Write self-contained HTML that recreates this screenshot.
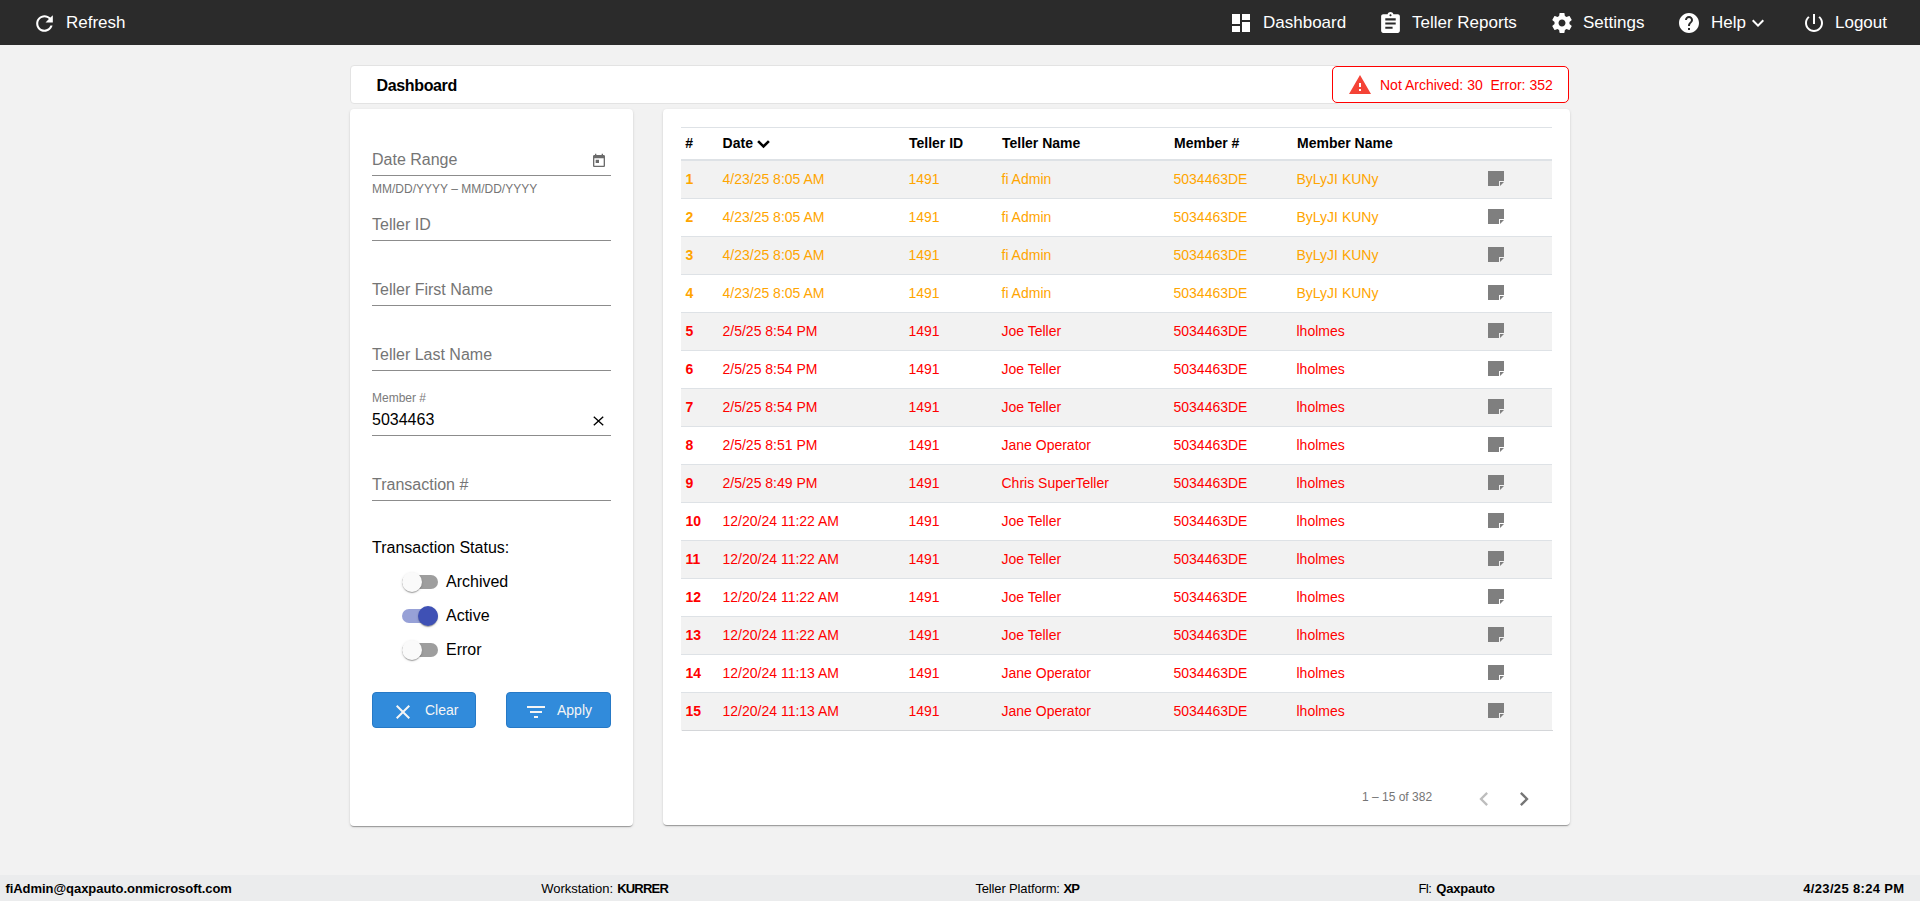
<!DOCTYPE html><html><head><meta charset="utf-8"><title>Dashboard</title><style>
*{margin:0;padding:0;box-sizing:border-box}
html,body{width:1920px;height:901px;overflow:hidden;background:#f2f2f2;font-family:"Liberation Sans",sans-serif}
.t{position:absolute;white-space:pre}
.i{position:absolute;display:block}
#nav{position:absolute;left:0;top:0;width:1920px;height:45px;background:#2b2b2b}
#titlecard{position:absolute;left:350px;top:65px;width:990px;height:39px;background:#fff;border:1px solid #e3e3e3;border-radius:4px}
#warn{position:absolute;left:1332px;top:66px;width:237px;height:37px;background:#fff;border:1px solid #f00;border-radius:5px}
.card{position:absolute;background:#fff;border-radius:4px;box-shadow:0 2px 1px -1px rgba(0,0,0,.2),0 1px 1px 0 rgba(0,0,0,.14),0 1px 3px 0 rgba(0,0,0,.12)}
#leftcard{left:350px;top:109px;width:283px;height:717px}
#rightcard{left:663px;top:109px;width:907px;height:716px}
.ul{position:absolute;left:372px;width:239px;height:1px;background:#8c8c8c}
.track{position:absolute;left:402px;width:36px;height:14px;border-radius:7px;background:rgba(0,0,0,.38)}
.track.on{background:rgba(63,81,181,.54)}
.thumb{position:absolute;width:20px;height:20px;border-radius:50%;background:#fafafa;box-shadow:0 2px 1px -1px rgba(0,0,0,.2),0 1px 1px 0 rgba(0,0,0,.14),0 1px 3px 0 rgba(0,0,0,.12)}
.thumb.on{background:#3f51b5}
.btn{position:absolute;top:692px;width:104px;height:36px;background:#318bdb;border:1px solid #2679c6;border-radius:4px}
.hl{position:absolute;left:681px;width:871px;background:#dee2e6}
.stripe{position:absolute;left:681px;width:871px;height:38px;background:#f2f2f2}
.note{position:absolute;left:1488px;width:16px;height:15px;background:#7b7b7b;border-radius:1px}
#footer{position:absolute;left:0;top:875px;width:1920px;height:26px;background:#ebeced}
</style></head><body><div id="nav"></div>
<svg class="i" style="left:31.5px;top:10.5px;width:25px;height:25px;" viewBox="0 0 24 24"><path fill="#fff" d="M17.65 6.35C16.2 4.9 14.21 4 12 4c-4.42 0-7.99 3.58-7.99 8s3.57 8 7.99 8c3.73 0 6.84-2.55 7.73-6h-2.08c-.82 2.33-3.04 4-5.65 4-3.31 0-6-2.69-6-6s2.69-6 6-6c1.66 0 3.14.69 4.22 1.78L13 11h7V4l-2.35 2.35z"/></svg>
<div class="t" style="left:66px;top:13.61px;font-size:17px;line-height:17px;font-weight:400;color:#fff;">Refresh</div>
<svg class="i" style="left:1229px;top:11px;width:24px;height:24px;" viewBox="0 0 24 24"><path fill="#fff" d="M3 13h8V3H3v10zm0 8h8v-6H3v6zm10 0h8V11h-8v10zm0-18v6h8V3h-8z"/></svg>
<div class="t" style="left:1263px;top:13.61px;font-size:17px;line-height:17px;font-weight:400;color:#fff;">Dashboard</div>
<svg class="i" style="left:1378px;top:10.5px;width:25px;height:25px;" viewBox="0 0 24 24"><path fill="#fff" d="M19 3h-4.18C14.4 1.84 13.3 1 12 1c-1.3 0-2.4.84-2.82 2H5c-1.1 0-2 .9-2 2v14c0 1.1.9 2 2 2h14c1.1 0 2-.9 2-2V5c0-1.1-.9-2-2-2zm-7 0c.55 0 1 .45 1 1s-.45 1-1 1-1-.45-1-1 .45-1 1-1zm2 14H7v-2h7v2zm3-4H7v-2h10v2zm0-4H7V7h10v2z"/></svg>
<div class="t" style="left:1412px;top:13.61px;font-size:17px;line-height:17px;font-weight:400;color:#fff;">Teller Reports</div>
<svg class="i" style="left:1549.5px;top:11px;width:24px;height:24px;" viewBox="0 0 24 24"><path fill="#fff" d="M19.43 12.98c.04-.32.07-.64.07-.98s-.03-.66-.07-.98l2.11-1.65c.19-.15.24-.42.12-.64l-2-3.46c-.12-.22-.39-.3-.61-.22l-2.49 1c-.52-.4-1.08-.73-1.69-.98l-.38-2.65C14.46 2.18 14.25 2 14 2h-4c-.25 0-.46.18-.49.42l-.38 2.65c-.61.25-1.17.59-1.69.98l-2.490-1c-.23-.09-.49 0-.61.22l-2 3.460c-.13.22-.07.49.12.64l2.11 1.65c-.04.32-.07.65-.07.98s.03.66.07.98l-2.11 1.65c-.19.15-.24.42-.12.64l2 3.46c.12.22.39.3.61.22l2.49-1c.52.4 1.08.73 1.69.98l.38 2.65c.03.24.24.42.49.42h4c.25 0 .46-.18.49-.42l.38-2.65c.61-.25 1.17-.59 1.69-.98l2.49 1c.23.09.49 0 .61-.22l2-3.46c.12-.22.07-.49-.12-.64l-2.11-1.65zM12 15.5c-1.93 0-3.5-1.57-3.5-3.5s1.57-3.5 3.5-3.5 3.5 1.57 3.5 3.5-1.57 3.5-3.5 3.5z"/></svg>
<div class="t" style="left:1583px;top:13.61px;font-size:17px;line-height:17px;font-weight:400;color:#fff;">Settings</div>
<svg class="i" style="left:1677px;top:11px;width:24px;height:24px;" viewBox="0 0 24 24"><path fill="#fff" d="M12 2C6.48 2 2 6.48 2 12s4.48 10 10 10 10-4.48 10-10S17.52 2 12 2zm1 17h-2v-2h2v2zm2.07-7.75l-.9.92C13.45 12.9 13 13.5 13 15h-2v-.5c0-1.1.45-2.1 1.17-2.83l1.24-1.26c.37-.36.59-.86.59-1.41 0-1.1-.9-2-2-2s-2 .9-2 2H8c0-2.21 1.79-4 4-4s4 1.79 4 4c0 .88-.36 1.68-.93 2.250z"/></svg>
<div class="t" style="left:1711px;top:13.61px;font-size:17px;line-height:17px;font-weight:400;color:#fff;">Help</div>
<svg class="i" style="left:1746px;top:11px;width:24px;height:24px;" viewBox="0 0 24 24"><path fill="#fff" d="M16.59 8.59L12 13.17 7.41 8.59 6 10l6 6 6-6z"/></svg>
<svg class="i" style="left:1802px;top:11px;width:24px;height:24px;" viewBox="0 0 24 24"><path fill="#fff" d="M13 3h-2v10h2V3zm4.83 2.17l-1.42 1.42C17.99 7.86 19 9.81 19 12c0 3.87-3.13 7-7 7s-7-3.13-7-7c0-2.19 1.01-4.140 2.58-5.42L6.17 5.17C4.23 6.82 3 9.26 3 12c0 4.97 4.03 9 9 9s9-4.03 9-9c0-2.74-1.23-5.18-3.17-6.83z"/></svg>
<div class="t" style="left:1835px;top:13.61px;font-size:17px;line-height:17px;font-weight:400;color:#fff;">Logout</div>
<div id="titlecard"></div>
<div class="t" style="left:376.5px;top:78.06px;font-size:16px;line-height:16px;font-weight:700;color:#000;letter-spacing:-0.35px">Dashboard</div>
<div id="warn"></div>
<svg class="i" style="left:1348px;top:73px;width:24px;height:24px;" viewBox="0 0 24 24"><path fill="#f44336" d="M1 21h22L12 2 1 21zm12-3h-2v-2h2v2zm0-4h-2v-4h2v4z"/></svg>
<div class="t" style="left:1380px;top:78.15px;font-size:14px;line-height:14px;font-weight:400;color:#f00;">Not Archived: 30&nbsp; Error: 352</div>
<div id="leftcard" class="card"></div>
<div class="t" style="left:372px;top:152.46px;font-size:16px;line-height:16px;font-weight:400;color:#757575;">Date Range</div>
<div class="ul" style="top:175px"></div>
<div class="t" style="left:372px;top:217.46px;font-size:16px;line-height:16px;font-weight:400;color:#757575;">Teller ID</div>
<div class="ul" style="top:240px"></div>
<div class="t" style="left:372px;top:282.46px;font-size:16px;line-height:16px;font-weight:400;color:#757575;">Teller First Name</div>
<div class="ul" style="top:305px"></div>
<div class="t" style="left:372px;top:347.46px;font-size:16px;line-height:16px;font-weight:400;color:#757575;">Teller Last Name</div>
<div class="ul" style="top:370px"></div>
<div class="t" style="left:372px;top:477.46px;font-size:16px;line-height:16px;font-weight:400;color:#757575;">Transaction #</div>
<div class="ul" style="top:500px"></div>
<svg class="i" style="left:591px;top:153px;width:16px;height:16px;" viewBox="0 0 24 24"><path fill="#6b6b6b" d="M19 3h-1V1h-2v2H8V1H6v2H5c-1.11 0-1.99.9-1.99 2L3 19c0 1.1.89 2 2 2h14c1.1 0 2-.9 2-2V5c0-1.1-.9-2-2-2zm0 16H5V8h14v11zM7 10h5v5H7z"/></svg>
<div class="t" style="left:372px;top:182.84px;font-size:12px;line-height:12px;font-weight:400;color:#757575;">MM/DD/YYYY – MM/DD/YYYY</div>
<div class="t" style="left:372px;top:391.84px;font-size:12px;line-height:12px;font-weight:400;color:#7b7b7b;">Member #</div>
<div class="t" style="left:372px;top:412.46px;font-size:16px;line-height:16px;font-weight:400;color:#000;">5034463</div>
<div class="ul" style="top:435px"></div>
<svg class="i" style="left:585px;top:408px;width:27px;height:24px" viewBox="585 408 27 24"><path d="M594.3 417.3L602.7 424.7M602.7 417.3L594.3 424.7" stroke="#000" stroke-width="1.35" fill="none" stroke-linecap="square"/></svg>
<div class="t" style="left:372px;top:540.46px;font-size:16px;line-height:16px;font-weight:400;color:#000;">Transaction Status:</div>
<div class="track" style="top:575px"></div><div class="thumb" style="left:402px;top:572px"></div>
<div class="t" style="left:446px;top:574.46px;font-size:16px;line-height:16px;font-weight:400;color:#000;">Archived</div>
<div class="track on" style="top:609px"></div><div class="thumb on" style="left:418px;top:606px"></div>
<div class="t" style="left:446px;top:608.46px;font-size:16px;line-height:16px;font-weight:400;color:#000;">Active</div>
<div class="track" style="top:643px"></div><div class="thumb" style="left:402px;top:640px"></div>
<div class="t" style="left:446px;top:642.46px;font-size:16px;line-height:16px;font-weight:400;color:#000;">Error</div>
<div class="btn" style="left:372px"></div>
<svg class="i" style="left:390.5px;top:700px;width:24px;height:24px;" viewBox="0 0 24 24"><path fill="#f5f5f5" d="M19 6.41L17.59 5 12 10.590 6.41 5 5 6.41 10.59 12 5 17.59 6.41 19 12 13.41 17.59 19 19 17.59 13.41 12z"/></svg>
<div class="t" style="left:425px;top:703.15px;font-size:14px;line-height:14px;font-weight:400;color:#f5f5f5;">Clear</div>
<div class="btn" style="left:506px;width:105px"></div>
<svg class="i" style="left:523.5px;top:700px;width:24px;height:24px;" viewBox="0 0 24 24"><path fill="#f5f5f5" d="M10 18h4v-2h-4v2zM3 6v2h18V6H3zm3 7h12v-2H6v2z"/></svg>
<div class="t" style="left:557px;top:703.15px;font-size:14px;line-height:14px;font-weight:400;color:#f5f5f5;">Apply</div>
<div id="rightcard" class="card"></div>
<div class="hl" style="top:127px;height:1px"></div>
<div class="hl" style="top:159px;height:2px"></div>
<div class="t" style="left:685.3px;top:136.15px;font-size:14px;line-height:14px;font-weight:700;color:#000;">#</div>
<div class="t" style="left:722.6px;top:136.15px;font-size:14px;line-height:14px;font-weight:700;color:#000;">Date</div>
<div class="t" style="left:909px;top:136.15px;font-size:14px;line-height:14px;font-weight:700;color:#000;">Teller ID</div>
<div class="t" style="left:1002px;top:136.15px;font-size:14px;line-height:14px;font-weight:700;color:#000;">Teller Name</div>
<div class="t" style="left:1174px;top:136.15px;font-size:14px;line-height:14px;font-weight:700;color:#000;">Member #</div>
<div class="t" style="left:1297px;top:136.15px;font-size:14px;line-height:14px;font-weight:700;color:#000;">Member Name</div>
<svg class="i" style="left:750px;top:130px;width:30px;height:24px" viewBox="750 130 30 24"><polyline points="758.1,141.1 763.5,146.5 768.9,141.1" fill="none" stroke="#000" stroke-width="2.6" stroke-linecap="butt" stroke-linejoin="miter"/></svg>
<div class="stripe" style="top:161px"></div>
<div class="hl" style="top:198px;height:1px"></div>
<div class="t" style="left:685.5px;top:172.15px;font-size:14px;line-height:14px;font-weight:700;color:#ffa500;">1</div>
<div class="t" style="left:722.5px;top:172.15px;font-size:14px;line-height:14px;font-weight:400;color:#ffa500;">4/23/25 8:05 AM</div>
<div class="t" style="left:908.5px;top:172.15px;font-size:14px;line-height:14px;font-weight:400;color:#ffa500;">1491</div>
<div class="t" style="left:1001.5px;top:172.15px;font-size:14px;line-height:14px;font-weight:400;color:#ffa500;">fi Admin</div>
<div class="t" style="left:1173.5px;top:172.15px;font-size:14px;line-height:14px;font-weight:400;color:#ffa500;">5034463DE</div>
<div class="t" style="left:1296.5px;top:172.15px;font-size:14px;line-height:14px;font-weight:400;color:#ffa500;">ByLyJI KUNy</div>
<svg class="i" style="left:1488px;top:171px;width:16px;height:15px" viewBox="0 0 16 15"><path fill="#7f7f7f" d="M0 0H16V10H11V15H0Z"/><path fill="#7f7f7f" d="M12 11H16L12 15Z"/></svg>
<div class="hl" style="top:236px;height:1px"></div>
<div class="t" style="left:685.5px;top:210.15px;font-size:14px;line-height:14px;font-weight:700;color:#ffa500;">2</div>
<div class="t" style="left:722.5px;top:210.15px;font-size:14px;line-height:14px;font-weight:400;color:#ffa500;">4/23/25 8:05 AM</div>
<div class="t" style="left:908.5px;top:210.15px;font-size:14px;line-height:14px;font-weight:400;color:#ffa500;">1491</div>
<div class="t" style="left:1001.5px;top:210.15px;font-size:14px;line-height:14px;font-weight:400;color:#ffa500;">fi Admin</div>
<div class="t" style="left:1173.5px;top:210.15px;font-size:14px;line-height:14px;font-weight:400;color:#ffa500;">5034463DE</div>
<div class="t" style="left:1296.5px;top:210.15px;font-size:14px;line-height:14px;font-weight:400;color:#ffa500;">ByLyJI KUNy</div>
<svg class="i" style="left:1488px;top:209px;width:16px;height:15px" viewBox="0 0 16 15"><path fill="#7f7f7f" d="M0 0H16V10H11V15H0Z"/><path fill="#7f7f7f" d="M12 11H16L12 15Z"/></svg>
<div class="stripe" style="top:237px"></div>
<div class="hl" style="top:274px;height:1px"></div>
<div class="t" style="left:685.5px;top:248.15px;font-size:14px;line-height:14px;font-weight:700;color:#ffa500;">3</div>
<div class="t" style="left:722.5px;top:248.15px;font-size:14px;line-height:14px;font-weight:400;color:#ffa500;">4/23/25 8:05 AM</div>
<div class="t" style="left:908.5px;top:248.15px;font-size:14px;line-height:14px;font-weight:400;color:#ffa500;">1491</div>
<div class="t" style="left:1001.5px;top:248.15px;font-size:14px;line-height:14px;font-weight:400;color:#ffa500;">fi Admin</div>
<div class="t" style="left:1173.5px;top:248.15px;font-size:14px;line-height:14px;font-weight:400;color:#ffa500;">5034463DE</div>
<div class="t" style="left:1296.5px;top:248.15px;font-size:14px;line-height:14px;font-weight:400;color:#ffa500;">ByLyJI KUNy</div>
<svg class="i" style="left:1488px;top:247px;width:16px;height:15px" viewBox="0 0 16 15"><path fill="#7f7f7f" d="M0 0H16V10H11V15H0Z"/><path fill="#7f7f7f" d="M12 11H16L12 15Z"/></svg>
<div class="hl" style="top:312px;height:1px"></div>
<div class="t" style="left:685.5px;top:286.15px;font-size:14px;line-height:14px;font-weight:700;color:#ffa500;">4</div>
<div class="t" style="left:722.5px;top:286.15px;font-size:14px;line-height:14px;font-weight:400;color:#ffa500;">4/23/25 8:05 AM</div>
<div class="t" style="left:908.5px;top:286.15px;font-size:14px;line-height:14px;font-weight:400;color:#ffa500;">1491</div>
<div class="t" style="left:1001.5px;top:286.15px;font-size:14px;line-height:14px;font-weight:400;color:#ffa500;">fi Admin</div>
<div class="t" style="left:1173.5px;top:286.15px;font-size:14px;line-height:14px;font-weight:400;color:#ffa500;">5034463DE</div>
<div class="t" style="left:1296.5px;top:286.15px;font-size:14px;line-height:14px;font-weight:400;color:#ffa500;">ByLyJI KUNy</div>
<svg class="i" style="left:1488px;top:285px;width:16px;height:15px" viewBox="0 0 16 15"><path fill="#7f7f7f" d="M0 0H16V10H11V15H0Z"/><path fill="#7f7f7f" d="M12 11H16L12 15Z"/></svg>
<div class="stripe" style="top:313px"></div>
<div class="hl" style="top:350px;height:1px"></div>
<div class="t" style="left:685.5px;top:324.15px;font-size:14px;line-height:14px;font-weight:700;color:#ff0000;">5</div>
<div class="t" style="left:722.5px;top:324.15px;font-size:14px;line-height:14px;font-weight:400;color:#ff0000;">2/5/25 8:54 PM</div>
<div class="t" style="left:908.5px;top:324.15px;font-size:14px;line-height:14px;font-weight:400;color:#ff0000;">1491</div>
<div class="t" style="left:1001.5px;top:324.15px;font-size:14px;line-height:14px;font-weight:400;color:#ff0000;">Joe Teller</div>
<div class="t" style="left:1173.5px;top:324.15px;font-size:14px;line-height:14px;font-weight:400;color:#ff0000;">5034463DE</div>
<div class="t" style="left:1296.5px;top:324.15px;font-size:14px;line-height:14px;font-weight:400;color:#ff0000;">lholmes</div>
<svg class="i" style="left:1488px;top:323px;width:16px;height:15px" viewBox="0 0 16 15"><path fill="#7f7f7f" d="M0 0H16V10H11V15H0Z"/><path fill="#7f7f7f" d="M12 11H16L12 15Z"/></svg>
<div class="hl" style="top:388px;height:1px"></div>
<div class="t" style="left:685.5px;top:362.15px;font-size:14px;line-height:14px;font-weight:700;color:#ff0000;">6</div>
<div class="t" style="left:722.5px;top:362.15px;font-size:14px;line-height:14px;font-weight:400;color:#ff0000;">2/5/25 8:54 PM</div>
<div class="t" style="left:908.5px;top:362.15px;font-size:14px;line-height:14px;font-weight:400;color:#ff0000;">1491</div>
<div class="t" style="left:1001.5px;top:362.15px;font-size:14px;line-height:14px;font-weight:400;color:#ff0000;">Joe Teller</div>
<div class="t" style="left:1173.5px;top:362.15px;font-size:14px;line-height:14px;font-weight:400;color:#ff0000;">5034463DE</div>
<div class="t" style="left:1296.5px;top:362.15px;font-size:14px;line-height:14px;font-weight:400;color:#ff0000;">lholmes</div>
<svg class="i" style="left:1488px;top:361px;width:16px;height:15px" viewBox="0 0 16 15"><path fill="#7f7f7f" d="M0 0H16V10H11V15H0Z"/><path fill="#7f7f7f" d="M12 11H16L12 15Z"/></svg>
<div class="stripe" style="top:389px"></div>
<div class="hl" style="top:426px;height:1px"></div>
<div class="t" style="left:685.5px;top:400.15px;font-size:14px;line-height:14px;font-weight:700;color:#ff0000;">7</div>
<div class="t" style="left:722.5px;top:400.15px;font-size:14px;line-height:14px;font-weight:400;color:#ff0000;">2/5/25 8:54 PM</div>
<div class="t" style="left:908.5px;top:400.15px;font-size:14px;line-height:14px;font-weight:400;color:#ff0000;">1491</div>
<div class="t" style="left:1001.5px;top:400.15px;font-size:14px;line-height:14px;font-weight:400;color:#ff0000;">Joe Teller</div>
<div class="t" style="left:1173.5px;top:400.15px;font-size:14px;line-height:14px;font-weight:400;color:#ff0000;">5034463DE</div>
<div class="t" style="left:1296.5px;top:400.15px;font-size:14px;line-height:14px;font-weight:400;color:#ff0000;">lholmes</div>
<svg class="i" style="left:1488px;top:399px;width:16px;height:15px" viewBox="0 0 16 15"><path fill="#7f7f7f" d="M0 0H16V10H11V15H0Z"/><path fill="#7f7f7f" d="M12 11H16L12 15Z"/></svg>
<div class="hl" style="top:464px;height:1px"></div>
<div class="t" style="left:685.5px;top:438.15px;font-size:14px;line-height:14px;font-weight:700;color:#ff0000;">8</div>
<div class="t" style="left:722.5px;top:438.15px;font-size:14px;line-height:14px;font-weight:400;color:#ff0000;">2/5/25 8:51 PM</div>
<div class="t" style="left:908.5px;top:438.15px;font-size:14px;line-height:14px;font-weight:400;color:#ff0000;">1491</div>
<div class="t" style="left:1001.5px;top:438.15px;font-size:14px;line-height:14px;font-weight:400;color:#ff0000;">Jane Operator</div>
<div class="t" style="left:1173.5px;top:438.15px;font-size:14px;line-height:14px;font-weight:400;color:#ff0000;">5034463DE</div>
<div class="t" style="left:1296.5px;top:438.15px;font-size:14px;line-height:14px;font-weight:400;color:#ff0000;">lholmes</div>
<svg class="i" style="left:1488px;top:437px;width:16px;height:15px" viewBox="0 0 16 15"><path fill="#7f7f7f" d="M0 0H16V10H11V15H0Z"/><path fill="#7f7f7f" d="M12 11H16L12 15Z"/></svg>
<div class="stripe" style="top:465px"></div>
<div class="hl" style="top:502px;height:1px"></div>
<div class="t" style="left:685.5px;top:476.15px;font-size:14px;line-height:14px;font-weight:700;color:#ff0000;">9</div>
<div class="t" style="left:722.5px;top:476.15px;font-size:14px;line-height:14px;font-weight:400;color:#ff0000;">2/5/25 8:49 PM</div>
<div class="t" style="left:908.5px;top:476.15px;font-size:14px;line-height:14px;font-weight:400;color:#ff0000;">1491</div>
<div class="t" style="left:1001.5px;top:476.15px;font-size:14px;line-height:14px;font-weight:400;color:#ff0000;">Chris SuperTeller</div>
<div class="t" style="left:1173.5px;top:476.15px;font-size:14px;line-height:14px;font-weight:400;color:#ff0000;">5034463DE</div>
<div class="t" style="left:1296.5px;top:476.15px;font-size:14px;line-height:14px;font-weight:400;color:#ff0000;">lholmes</div>
<svg class="i" style="left:1488px;top:475px;width:16px;height:15px" viewBox="0 0 16 15"><path fill="#7f7f7f" d="M0 0H16V10H11V15H0Z"/><path fill="#7f7f7f" d="M12 11H16L12 15Z"/></svg>
<div class="hl" style="top:540px;height:1px"></div>
<div class="t" style="left:685.5px;top:514.15px;font-size:14px;line-height:14px;font-weight:700;color:#ff0000;">10</div>
<div class="t" style="left:722.5px;top:514.15px;font-size:14px;line-height:14px;font-weight:400;color:#ff0000;">12/20/24 11:22 AM</div>
<div class="t" style="left:908.5px;top:514.15px;font-size:14px;line-height:14px;font-weight:400;color:#ff0000;">1491</div>
<div class="t" style="left:1001.5px;top:514.15px;font-size:14px;line-height:14px;font-weight:400;color:#ff0000;">Joe Teller</div>
<div class="t" style="left:1173.5px;top:514.15px;font-size:14px;line-height:14px;font-weight:400;color:#ff0000;">5034463DE</div>
<div class="t" style="left:1296.5px;top:514.15px;font-size:14px;line-height:14px;font-weight:400;color:#ff0000;">lholmes</div>
<svg class="i" style="left:1488px;top:513px;width:16px;height:15px" viewBox="0 0 16 15"><path fill="#7f7f7f" d="M0 0H16V10H11V15H0Z"/><path fill="#7f7f7f" d="M12 11H16L12 15Z"/></svg>
<div class="stripe" style="top:541px"></div>
<div class="hl" style="top:578px;height:1px"></div>
<div class="t" style="left:685.5px;top:552.15px;font-size:14px;line-height:14px;font-weight:700;color:#ff0000;">11</div>
<div class="t" style="left:722.5px;top:552.15px;font-size:14px;line-height:14px;font-weight:400;color:#ff0000;">12/20/24 11:22 AM</div>
<div class="t" style="left:908.5px;top:552.15px;font-size:14px;line-height:14px;font-weight:400;color:#ff0000;">1491</div>
<div class="t" style="left:1001.5px;top:552.15px;font-size:14px;line-height:14px;font-weight:400;color:#ff0000;">Joe Teller</div>
<div class="t" style="left:1173.5px;top:552.15px;font-size:14px;line-height:14px;font-weight:400;color:#ff0000;">5034463DE</div>
<div class="t" style="left:1296.5px;top:552.15px;font-size:14px;line-height:14px;font-weight:400;color:#ff0000;">lholmes</div>
<svg class="i" style="left:1488px;top:551px;width:16px;height:15px" viewBox="0 0 16 15"><path fill="#7f7f7f" d="M0 0H16V10H11V15H0Z"/><path fill="#7f7f7f" d="M12 11H16L12 15Z"/></svg>
<div class="hl" style="top:616px;height:1px"></div>
<div class="t" style="left:685.5px;top:590.15px;font-size:14px;line-height:14px;font-weight:700;color:#ff0000;">12</div>
<div class="t" style="left:722.5px;top:590.15px;font-size:14px;line-height:14px;font-weight:400;color:#ff0000;">12/20/24 11:22 AM</div>
<div class="t" style="left:908.5px;top:590.15px;font-size:14px;line-height:14px;font-weight:400;color:#ff0000;">1491</div>
<div class="t" style="left:1001.5px;top:590.15px;font-size:14px;line-height:14px;font-weight:400;color:#ff0000;">Joe Teller</div>
<div class="t" style="left:1173.5px;top:590.15px;font-size:14px;line-height:14px;font-weight:400;color:#ff0000;">5034463DE</div>
<div class="t" style="left:1296.5px;top:590.15px;font-size:14px;line-height:14px;font-weight:400;color:#ff0000;">lholmes</div>
<svg class="i" style="left:1488px;top:589px;width:16px;height:15px" viewBox="0 0 16 15"><path fill="#7f7f7f" d="M0 0H16V10H11V15H0Z"/><path fill="#7f7f7f" d="M12 11H16L12 15Z"/></svg>
<div class="stripe" style="top:617px"></div>
<div class="hl" style="top:654px;height:1px"></div>
<div class="t" style="left:685.5px;top:628.15px;font-size:14px;line-height:14px;font-weight:700;color:#ff0000;">13</div>
<div class="t" style="left:722.5px;top:628.15px;font-size:14px;line-height:14px;font-weight:400;color:#ff0000;">12/20/24 11:22 AM</div>
<div class="t" style="left:908.5px;top:628.15px;font-size:14px;line-height:14px;font-weight:400;color:#ff0000;">1491</div>
<div class="t" style="left:1001.5px;top:628.15px;font-size:14px;line-height:14px;font-weight:400;color:#ff0000;">Joe Teller</div>
<div class="t" style="left:1173.5px;top:628.15px;font-size:14px;line-height:14px;font-weight:400;color:#ff0000;">5034463DE</div>
<div class="t" style="left:1296.5px;top:628.15px;font-size:14px;line-height:14px;font-weight:400;color:#ff0000;">lholmes</div>
<svg class="i" style="left:1488px;top:627px;width:16px;height:15px" viewBox="0 0 16 15"><path fill="#7f7f7f" d="M0 0H16V10H11V15H0Z"/><path fill="#7f7f7f" d="M12 11H16L12 15Z"/></svg>
<div class="hl" style="top:692px;height:1px"></div>
<div class="t" style="left:685.5px;top:666.15px;font-size:14px;line-height:14px;font-weight:700;color:#ff0000;">14</div>
<div class="t" style="left:722.5px;top:666.15px;font-size:14px;line-height:14px;font-weight:400;color:#ff0000;">12/20/24 11:13 AM</div>
<div class="t" style="left:908.5px;top:666.15px;font-size:14px;line-height:14px;font-weight:400;color:#ff0000;">1491</div>
<div class="t" style="left:1001.5px;top:666.15px;font-size:14px;line-height:14px;font-weight:400;color:#ff0000;">Jane Operator</div>
<div class="t" style="left:1173.5px;top:666.15px;font-size:14px;line-height:14px;font-weight:400;color:#ff0000;">5034463DE</div>
<div class="t" style="left:1296.5px;top:666.15px;font-size:14px;line-height:14px;font-weight:400;color:#ff0000;">lholmes</div>
<svg class="i" style="left:1488px;top:665px;width:16px;height:15px" viewBox="0 0 16 15"><path fill="#7f7f7f" d="M0 0H16V10H11V15H0Z"/><path fill="#7f7f7f" d="M12 11H16L12 15Z"/></svg>
<div class="stripe" style="top:693px"></div>
<div class="hl" style="top:730px;height:1px;left:682px;background:#d4d6d9"></div>
<div class="t" style="left:685.5px;top:704.15px;font-size:14px;line-height:14px;font-weight:700;color:#ff0000;">15</div>
<div class="t" style="left:722.5px;top:704.15px;font-size:14px;line-height:14px;font-weight:400;color:#ff0000;">12/20/24 11:13 AM</div>
<div class="t" style="left:908.5px;top:704.15px;font-size:14px;line-height:14px;font-weight:400;color:#ff0000;">1491</div>
<div class="t" style="left:1001.5px;top:704.15px;font-size:14px;line-height:14px;font-weight:400;color:#ff0000;">Jane Operator</div>
<div class="t" style="left:1173.5px;top:704.15px;font-size:14px;line-height:14px;font-weight:400;color:#ff0000;">5034463DE</div>
<div class="t" style="left:1296.5px;top:704.15px;font-size:14px;line-height:14px;font-weight:400;color:#ff0000;">lholmes</div>
<svg class="i" style="left:1488px;top:703px;width:16px;height:15px" viewBox="0 0 16 15"><path fill="#7f7f7f" d="M0 0H16V10H11V15H0Z"/><path fill="#7f7f7f" d="M12 11H16L12 15Z"/></svg>
<div class="t" style="left:1362px;top:790.84px;font-size:12px;line-height:12px;font-weight:400;color:#757575;">1 – 15 of 382</div>
<svg class="i" style="left:1470px;top:785px;width:28px;height:28px;" viewBox="0 0 24 24"><path fill="rgba(0,0,0,.26)" d="M15.41 7.41L14 6l-6 6 6 6 1.41-1.41L10.83 12z"/></svg>
<svg class="i" style="left:1510px;top:785px;width:28px;height:28px;" viewBox="0 0 24 24"><path fill="rgba(0,0,0,.54)" d="M10 6L8.59 7.41 13.17 12l-4.58 4.59L10 18l6-6z"/></svg>
<div id="footer"></div>
<div class="t" style="left:5.4px;top:882.00px;font-size:13px;line-height:13px;font-weight:700;color:#000;letter-spacing:-0.045px">fiAdmin@qaxpauto.onmicrosoft.com</div>
<div class="t" style="left:541.2px;top:882.00px;font-size:13px;line-height:13px;font-weight:400;color:#000;letter-spacing:-0.018px">Workstation:</div>
<div class="t" style="left:617.2px;top:882.00px;font-size:13px;line-height:13px;font-weight:700;color:#000;letter-spacing:-0.800px">KURRER</div>
<div class="t" style="left:975.4000000000001px;top:882.00px;font-size:13px;line-height:13px;font-weight:400;color:#000;letter-spacing:-0.140px">Teller Platform:</div>
<div class="t" style="left:1063.4px;top:882.00px;font-size:13px;line-height:13px;font-weight:700;color:#000;letter-spacing:-0.800px">XP</div>
<div class="t" style="left:1418.3999999999999px;top:882.00px;font-size:13px;line-height:13px;font-weight:400;color:#000;letter-spacing:-0.900px">FI:</div>
<div class="t" style="left:1436.2px;top:882.00px;font-size:13px;line-height:13px;font-weight:700;color:#000;letter-spacing:-0.157px">Qaxpauto</div>
<div class="t" style="left:1803.1999999999998px;top:882.00px;font-size:13px;line-height:13px;font-weight:700;color:#000;letter-spacing:0.350px">4/23/25 8:24 PM</div></body></html>
